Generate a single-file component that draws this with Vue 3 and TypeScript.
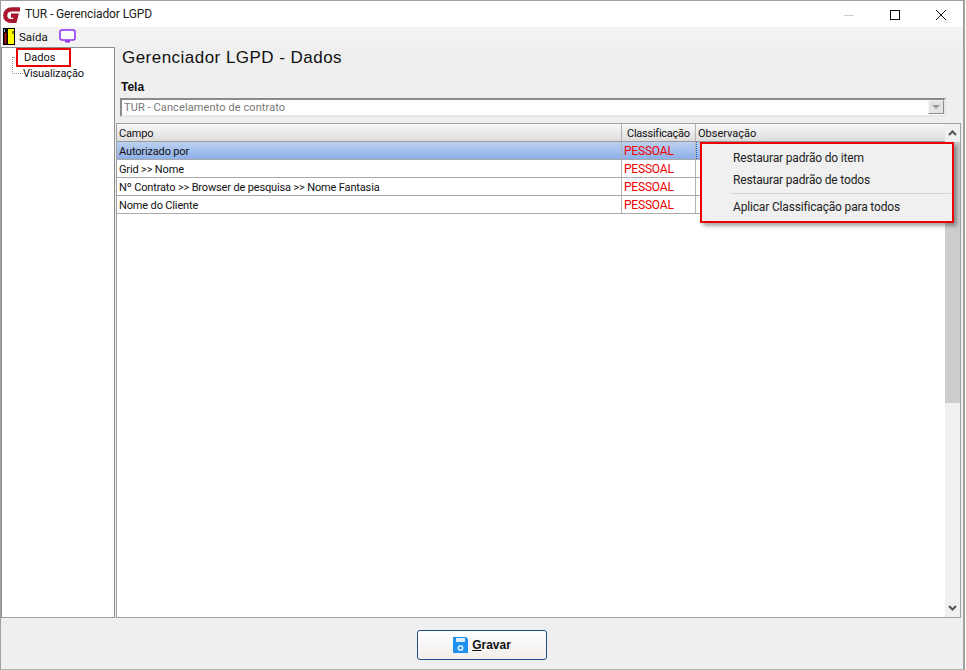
<template>
  <div class="window">
    <div class="titlebar">
      <svg class="logo" width="18" height="18" viewBox="0 0 18 18">
        <path d="M17 3.4 H9 C4.2 3.4 2.2 6.2 2.2 9.4 C2.2 13 4.8 15 8 15 H11.8 L13.2 9.6 H8" fill="none" stroke="#a8172f" stroke-width="4.2" />
      </svg>
      <span class="title-text">TUR - Gerenciador LGPD</span>
      <div class="win-controls">
        <svg width="46" height="26" viewBox="0 0 46 26"><path d="M18 14.5 H28" stroke="#ccc" /></svg>
        <svg width="46" height="26" viewBox="0 0 46 26"><rect x="18.5" y="9.5" width="9" height="9" fill="none" stroke="#111" /></svg>
        <svg width="46" height="26" viewBox="0 0 46 26"><path d="M18 9 L28 19 M28 9 L18 19" stroke="#111" fill="none" /></svg>
      </div>
    </div>

    <div class="toolbar">
      <svg class="door" width="12" height="17" viewBox="0 0 12 17">
        <rect x="0" y="0" width="12" height="17" fill="#000" />
        <rect x="5" y="1" width="6" height="15" fill="#ffff00" />
        <path d="M1.5 1 V4" stroke="#3fb8c8" />
        <path d="M2.5 5 V16" stroke="#a11" stroke-width="2" />
        <path d="M10 3 V6" stroke="#000" />
      </svg>
      <span class="saida">Saída</span>
      <svg class="monitor" width="17" height="15" viewBox="0 0 17 15">
        <rect x="1" y="1" width="15" height="10" rx="2" fill="#fff" stroke="#8f2cf0" stroke-width="1.5" />
        <path d="M6 12.5 H11" stroke="#8f2cf0" stroke-width="2" />
      </svg>
    </div>

    <div class="body">
      <aside class="tree">
        <div class="tree-lines"></div>
        <div class="tree-selected">Dados</div>
        <div class="tree-item">Visualização</div>
      </aside>

      <main class="content">
        <h1 class="heading">Gerenciador LGPD - Dados</h1>
        <div class="label">Tela</div>
        <div class="combo">
          <span>TUR - Cancelamento de contrato</span>
          <span class="combo-btn"><i class="combo-arrow"></i></span>
        </div>

        <div class="grid">
          <div class="grid-main">
            <div class="row header">
              <div class="cell c1">Campo</div>
              <div class="cell c2">Classificação</div>
              <div class="cell c3">Observação</div>
            </div>
            <div v-for="(r, i) in rows" :key="r" class="row" :class="{ selected: i === 0 }">
              <div class="cell c1">{{ r }}</div>
              <div class="cell c2 red">PESSOAL</div>
              <div class="cell c3" :class="{ focused: i === 0 }"></div>
            </div>
          </div>
          <div class="scrollbar">
            <svg class="sb-btn" width="15" height="18" viewBox="0 0 15 18"><path d="M4 11 L7.5 7.5 L11 11" fill="none" stroke="#555" stroke-width="2" /></svg>
            <div class="thumb"></div>
            <div class="track"></div>
            <svg class="sb-btn" width="15" height="18" viewBox="0 0 15 18"><path d="M4 7 L7.5 10.5 L11 7" fill="none" stroke="#555" stroke-width="2" /></svg>
          </div>

          <div class="menu">
            <div class="menu-item">Restaurar padrão do item</div>
            <div class="menu-item">Restaurar padrão de todos</div>
            <div class="menu-sep"></div>
            <div class="menu-item">Aplicar Classificação para todos</div>
          </div>
        </div>
      </main>
    </div>

    <div class="footer">
      <button class="save">
        <svg width="15" height="16" viewBox="0 0 15 16">
          <path d="M0 0 H13 L15 2 V16 H0 Z" fill="#1e90f0" />
          <rect x="3" y="1" width="9" height="4" fill="#d8ecfb" />
          <circle cx="7.5" cy="11" r="3" fill="#d8ecfb" />
          <circle cx="7.5" cy="11" r="1.3" fill="#1e90f0" />
        </svg>
        <span><u>G</u>ravar</span>
      </button>
    </div>
  </div>
</template>

<script setup lang="ts">
const rows: string[] = [
  'Autorizado por',
  'Grid >> Nome',
  'Nº Contrato >> Browser de pesquisa >> Nome Fantasia',
  'Nome do Cliente'
]
</script>

<style scoped>
.window {
  width: 965px;
  height: 670px;
  box-sizing: border-box;
  display: flex;
  flex-direction: column;
  background: #efefef;
  border: 1px solid #a0a0a0;
  border-right-width: 2px;
  border-bottom-color: #b4b4b4;
  font-family: Roboto, "Liberation Sans", sans-serif;
  font-size: 11px;
  color: #111;
  overflow: hidden;
}
.titlebar {
  height: 26px;
  flex: none;
  display: flex;
  align-items: center;
  background: #fff;
  padding-left: 2px;
}
.logo {
  margin-right: 4px;
  margin-top: 1px;
}
.title-text {
  font-size: 12px;
  letter-spacing: -0.1px;
  color: #222;
}
.win-controls {
  margin-left: auto;
  margin-right: -1px;
  display: flex;
}
.toolbar {
  height: 20px;
  flex: none;
  display: flex;
  align-items: center;
  padding: 0 0 1px 2px;
  box-sizing: border-box;
  background: #f2f2f2;
}
.saida {
  font-size: 11.5px;
  margin-left: 4px;
}
.monitor {
  margin-left: 11px;
}
.door {
  flex: none;
}
.body {
  flex: 1;
  min-height: 0;
  display: flex;
}
.tree {
  width: 114px;
  flex: none;
  box-sizing: border-box;
  background: #fff;
  border: 1px solid #8f8f8f;
  border-bottom-color: #a0a0a0;
  position: relative;
  padding: 0 0 0 14px;
}
.tree-lines {
  position: absolute;
  left: 10px;
  top: 9px;
  width: 10px;
  height: 16px;
  border-left: 1px dotted #999;
  border-bottom: 1px dotted #999;
}
.tree-lines::before {
  content: "";
  position: absolute;
  left: 0;
  top: 0;
  width: 4px;
  border-top: 1px dotted #999;
}
.tree-selected {
  position: relative;
  width: 55px;
  height: 19px;
  box-sizing: border-box;
  border: 2px solid #ee0000;
  padding: 0 0 0 6px;
  line-height: 15px;
}
.tree-item {
  position: relative;
  padding-left: 7px;
  line-height: 14px;
  letter-spacing: -0.1px;
}
.content {
  flex: 1;
  min-width: 0;
  display: flex;
  flex-direction: column;
  padding-left: 1px;
}
.heading {
  margin: 1px 0 0;
  padding: 0 0 0 6px;
  height: 24px;
  font-family: "Liberation Sans", Arial, sans-serif;
  font-weight: 400;
  font-size: 17px;
  letter-spacing: 0.47px;
  line-height: 20px;
  color: #111;
}
.label {
  margin-top: 8px;
  padding-left: 5px;
  height: 14px;
  line-height: 14px;
  font-family: "Liberation Sans", Arial, sans-serif;
  font-weight: 700;
  font-size: 12px;
}
.combo {
  margin: 4px 17px 0 4px;
  height: 19px;
  box-sizing: border-box;
  background: #fff;
  border: 2px solid;
  border-color: #8a8a8a #e6e6e6 #e6e6e6 #8a8a8a;
  color: #777;
  padding-left: 2px;
  line-height: 15px;
  letter-spacing: 0.1px;
  display: flex;
  justify-content: space-between;
}
.combo-btn {
  width: 16px;
  height: 14px;
  background: #e4e4e4;
  border: 1px solid;
  border-color: #f4f4f4 #8c8c8c #8c8c8c #f4f4f4;
  box-sizing: border-box;
  display: flex;
  align-items: center;
  justify-content: center;
}
.combo-arrow {
  width: 0;
  height: 0;
  border-left: 4px solid transparent;
  border-right: 4px solid transparent;
  border-top: 4px solid #999;
}
.grid {
  position: relative;
  margin-top: 6px;
  flex: 1;
  min-height: 0;
  display: flex;
  box-sizing: border-box;
  background: #fff;
  border: 1px solid #a0a0a0;
  margin-right: 2px;
}
.grid-main {
  flex: 1;
  min-width: 0;
}
.row {
  display: flex;
  height: 18px;
  box-sizing: border-box;
  border-bottom: 1px solid #a9a9a9;
  line-height: 19px;
}
.cell {
  box-sizing: border-box;
  padding-left: 2px;
  border-right: 1px solid #b4b4b4;
  white-space: nowrap;
  overflow: hidden;
}
.c1 {
  width: 505px;
  flex: none;
  letter-spacing: -0.15px;
}
.c2 {
  width: 74px;
  flex: none;
}
.c3 {
  flex: 1;
  border-right: 0;
}
.header {
  background: linear-gradient(#f8f8f8, #dcdcdc);
  border-bottom-color: #9a9a9a;
}
.header .c2 {
  padding-left: 5px;
  letter-spacing: -0.25px;
}
.selected {
  background: linear-gradient(#bdd0f0, #8db0e8);
}
.red {
  color: #f00000;
  font-size: 12px;
  letter-spacing: -0.2px;
}
.focused {
  border-left: 1px dotted #1a5fd0;
}
.scrollbar {
  width: 15px;
  flex: none;
  background: #f0f0f0;
  display: flex;
  flex-direction: column;
}
.sb-btn {
  flex: none;
}
.thumb {
  height: 261px;
  background: #cdcdcd;
}
.track {
  flex: 1;
}
.menu {
  position: absolute;
  left: 583px;
  top: 18px;
  width: 254px;
  height: 81px;
  box-sizing: border-box;
  background: #f0f0f0;
  border: 2px solid #ee0000;
  box-shadow: 3px 3px 4px rgba(0, 0, 0, 0.35);
  padding-top: 3px;
  font-size: 12px;
  letter-spacing: -0.17px;
  color: #222;
}
.menu-item {
  height: 22px;
  line-height: 22px;
  padding-left: 31px;
}
.menu-sep {
  height: 1px;
  background: #d4d4d4;
  margin: 2px 1px 2px 29px;
}
.footer {
  height: 51px;
  flex: none;
  display: flex;
  align-items: flex-start;
  justify-content: center;
  padding-top: 12px;
  box-sizing: border-box;
}
.save {
  width: 130px;
  height: 30px;
  display: flex;
  align-items: center;
  justify-content: center;
  gap: 4px;
  background: linear-gradient(#ffffff, #f1eeeb);
  border: 1px solid #1d4c86;
  border-radius: 3px;
  font-family: "Liberation Sans", Arial, sans-serif;
  font-weight: 700;
  font-size: 12px;
  color: #111;
  padding: 0;
}
</style>

<style>
html, body {
  margin: 0;
  background: #fff;
}
</style>
